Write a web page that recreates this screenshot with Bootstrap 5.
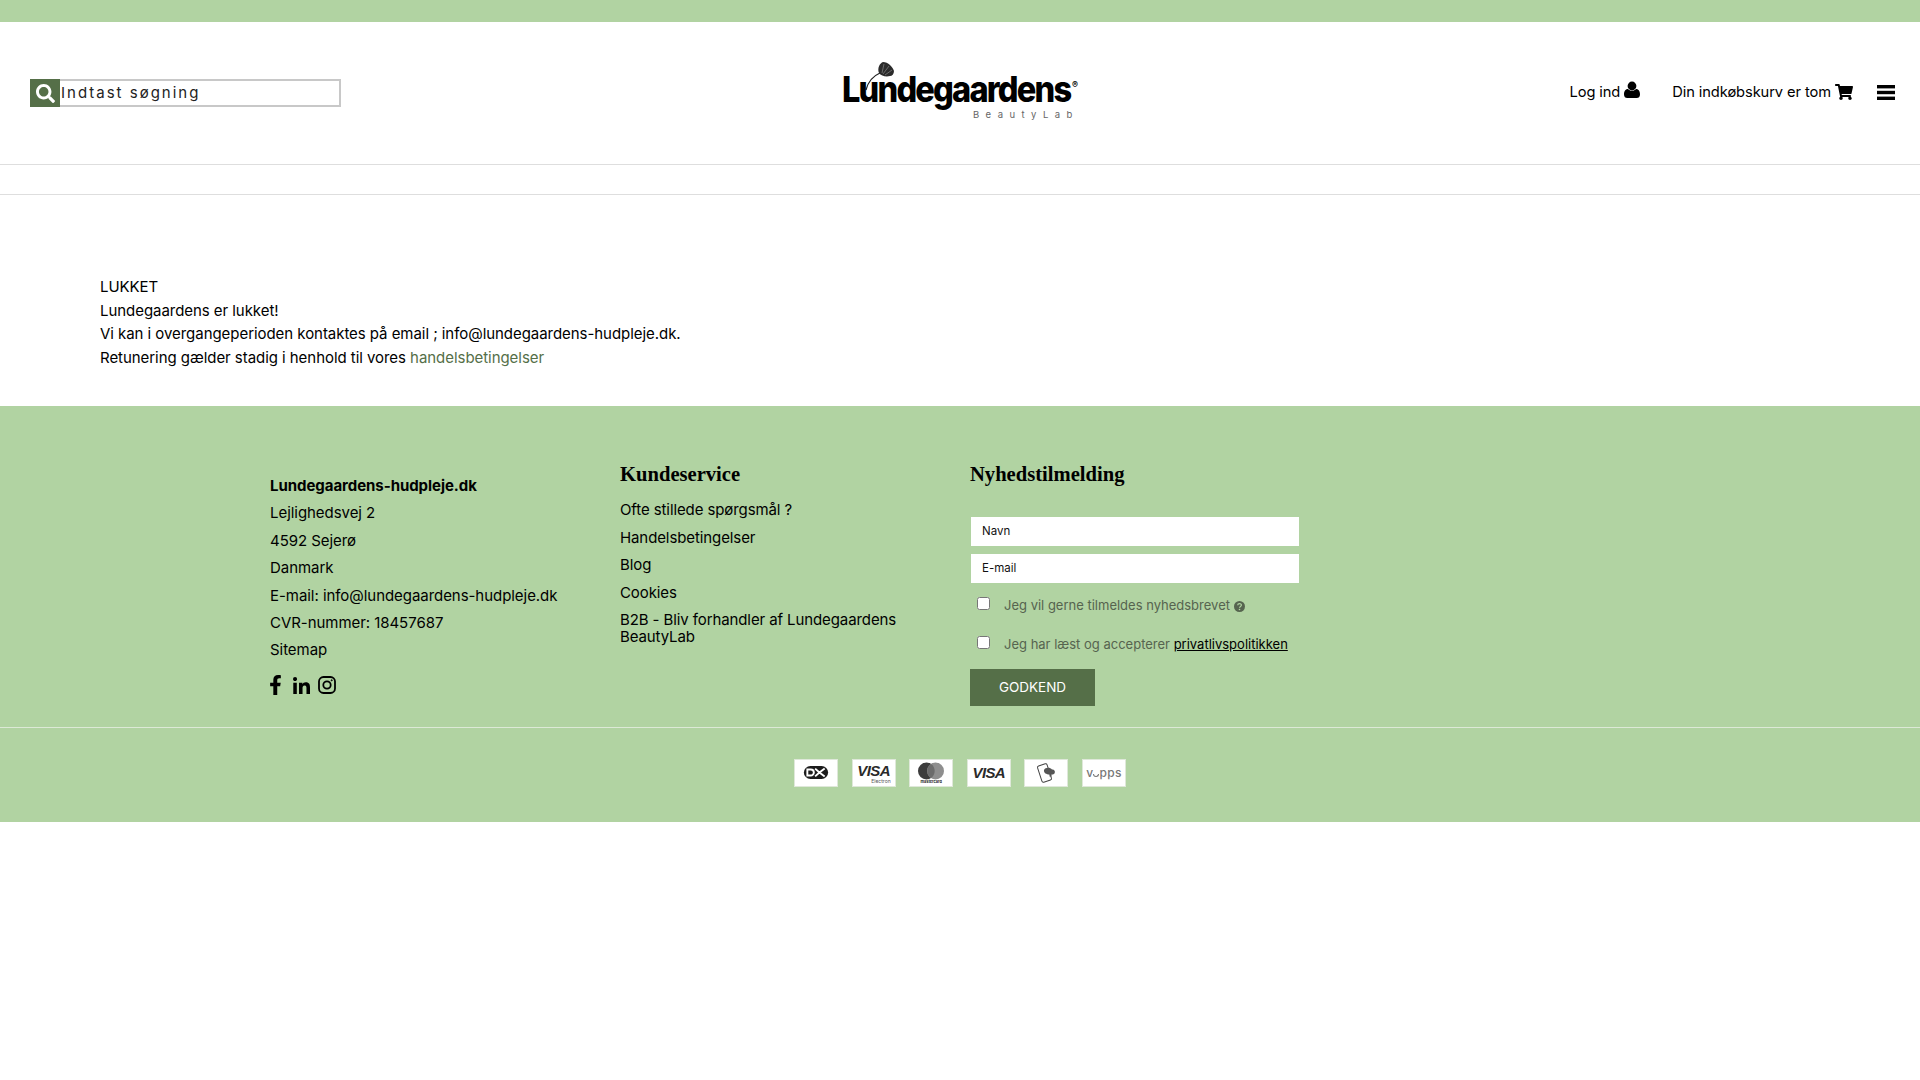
<!DOCTYPE html>
<html lang="da">
<head>
<meta charset="utf-8">
<title>Lundegaardens</title>
<link href="https://cdn.jsdelivr.net/npm/bootstrap@5.3.0/dist/css/bootstrap.min.css" rel="stylesheet">
<style>
body{font-family:Inter,"Liberation Sans",sans-serif;font-size:15px;color:#000;background:#fff}
a{color:inherit;text-decoration:none}
.topstrip{height:22px;background:#b1d3a2}
.headbar{height:143px;padding:0 25px;border-bottom:1px solid #dedede}
.navstrip{height:30px;border-bottom:1px solid #dedede}
.headside{flex:1 1 0;min-width:0}
.searchwrap{width:311px;height:28px;margin-left:5px}
.searchbtn{width:30px;height:28px;background:#556f48;border:0;padding:0}
.searchinput{flex:1;min-width:0;height:28px;border:2px solid #c8c8c8;border-left:0;padding:0 0 2px 1px;font-size:15px;letter-spacing:2px;color:#222;outline:0;font-family:inherit}
.searchinput::placeholder{color:#222;opacity:1}
.logobox{position:relative;display:block;flex:none;width:240px;height:64px;color:#000}
.logoname{position:absolute;left:2px;top:8px;font-weight:800;font-size:36px;line-height:40px;letter-spacing:-2px;white-space:nowrap;transform:scaleX(.905);transform-origin:left center}
.logosub{position:absolute;left:133px;top:48px;font-size:9.500px;line-height:12px;letter-spacing:6.400px;color:#666;white-space:nowrap}
.logoreg{position:absolute;left:232px;top:19px;font-size:9px;line-height:10px;font-weight:700}
.logoflower{position:absolute;left:25px;top:1px}
.headlinks{font-size:14.700px;letter-spacing:-.1px;padding-bottom:1px}
.content{padding:80px 100px 36.600px;line-height:23.600px;letter-spacing:-.05px}
.content a{color:#556f48}
.footmain{background:#b1d3a2;height:322px;padding:0 255px;border-bottom:1px solid #dce9d6}
.footcol{width:350px;padding:0 15px}
.footcol h5{font-family:"Liberation Serif",serif;font-weight:700;font-size:20.600px;line-height:26px;margin:0}
.addr{padding-top:66px;letter-spacing:-.05px}
.addr div{height:27.400px;line-height:27.400px}
.soc{margin-top:8px;height:24px}
.svc{padding-top:55px}
.svc ul{list-style:none;margin:14.500px 0 0;padding:0;width:290px}
.svc li{line-height:17px;margin-bottom:10.400px;letter-spacing:-.1px}
.news{padding-top:55px}
.news input.fld{display:block;width:328px;height:29px;border:0;background:#fff;margin-left:1px;margin-bottom:8px;font-size:11.500px;padding:0 11px;font-family:inherit;outline:0}
.news input.fld::placeholder{color:#111;opacity:1}
.fldfirst{margin-top:30px}
.chk{display:flex;align-items:flex-start;font-size:13px;color:#56644f;margin:0}
.chk input{width:13px;height:13px;margin:1px 14px 0 7px;flex:none}
.chk a{color:#000;text-decoration:underline}
.chk1{margin-top:13px;height:39px}
.chk2{height:34px}
.gobtn{background:#556f48;color:#fff;border:0;border-radius:0;width:125px;height:37px;font-size:13.500px;padding:0}
.footpay{background:#b1d3a2;height:94px;padding-top:31px;gap:13.600px}
.paycard{width:44px;height:28px;background:#fff;border:1px solid #dfe8da;display:flex;align-items:center;justify-content:center;overflow:hidden;position:relative}
.visa{font-family:"Liberation Sans",sans-serif;font-weight:700;font-style:italic;font-size:15px;letter-spacing:-.6px;color:#2a2a2a;line-height:1}
.visaup{margin-bottom:5px}
.visasub{position:absolute;right:4px;bottom:2px;font-size:5px;line-height:1;color:#555}
.mcsub{position:absolute;left:0;right:0;bottom:2px;text-align:center;font-size:3.800px;font-weight:700;line-height:1;color:#222}
.vipps{font-size:12px;color:#777;font-weight:500;letter-spacing:.3px}
.vippsi{color:transparent;position:relative;display:inline-block;width:6px;text-align:center}
.vippsi::after{content:"";position:absolute;left:0;right:0;bottom:5px;height:3px;border:1.500px solid #777;border-top:0;border-radius:0 0 4px 4px}
</style>
</head>
<body>
<div class="topstrip"></div>
<header class="headbar d-flex align-items-center">
  <div class="headside">
  <form class="searchwrap d-flex">
    <button class="searchbtn d-flex align-items-center justify-content-center" type="button" aria-label="Søg">
      <svg width="19" height="19" viewBox="0 0 512 512"><path fill="#fff" d="M505 442.7L405.3 343c-4.5-4.5-10.6-7-17-7H372c27.6-35.3 44-79.7 44-128C416 93.1 322.9 0 208 0S0 93.1 0 208s93.1 208 208 208c48.3 0 92.7-16.4 128-44v16.3c0 6.4 2.5 12.5 7 17l99.7 99.7c9.4 9.4 24.6 9.4 33.9 0l28.3-28.3c9.4-9.4 9.4-24.6.1-34zM208 336c-70.7 0-128-57.2-128-128 0-70.7 57.2-128 128-128 70.7 0 128 57.2 128 128 0 70.7-57.2 128-128 128z"/></svg>
    </button>
    <input class="searchinput" placeholder="Indtast søgning">
  </form>
  </div>
  <a href="#" class="logobox">
    <svg class="logoflower" width="30" height="30" viewBox="0 0 30 30"><path d="M1 28C3 20 8 14 15 11" fill="none" stroke="#222" stroke-width="1.200"/><path d="M14 11C12 6 15 1 18 0c5 0 10 5 11 9 0 3-2 5-4 5-4 1-9 0-11-3z" fill="#2b2b2b"/><path d="M17 11l2-9M18 12l6-8M20 13l7-5" stroke="#aaa" stroke-width=".5"/></svg>
    <span class="logoname">Lundegaardens</span>
    <span class="logoreg">®</span>
    <span class="logosub">BeautyLab</span>
  </a>
  <div class="headside headlinks d-flex align-items-center justify-content-end">
    <a href="#" class="d-flex align-items-center gap-1">Log ind
      <svg width="16" height="18" class="mb-1" viewBox="0 0 16 18"><circle cx="8" cy="5" r="4.400"/><path d="M0 13.500C0 9.500 2 8 4 8c1 1 2.400 1.800 4 1.800S11 9 12 8c2 0 4 1.500 4 5.500 0 2.500-1.500 3.500-3.200 3.500H3.200C1.500 17 0 16 0 13.500z"/></svg>
    </a>
    <a href="#" class="d-flex align-items-center gap-1 ms-4 ps-2">Din indkøbskurv er tom
      <svg width="18" height="16" viewBox="0 0 576 512"><path d="M528.12 301.319l47.273-208C578.806 78.301 567.391 64 551.99 64H159.208l-9.166-44.81C147.758 8.021 137.93 0 126.529 0H24C10.745 0 0 10.745 0 24v16c0 13.255 10.745 24 24 24h69.883l70.248 343.435C147.325 417.1 136 435.222 136 456c0 30.928 25.072 56 56 56s56-25.072 56-56c0-15.674-6.447-29.835-16.824-40h209.647C430.447 426.165 424 440.326 424 456c0 30.928 25.072 56 56 56s56-25.072 56-56c0-22.172-12.888-41.332-31.579-50.405l5.517-24.276c3.413-15.018-8.002-29.319-23.403-29.319H218.117l-6.545-32h293.145c11.206 0 20.92-7.754 23.403-18.681z"/></svg>
    </a>
    <a href="#" class="ms-4 d-flex" aria-label="Menu">
      <svg width="18" height="15" viewBox="0 0 18 15"><rect width="18" height="3.400"/><rect y="5.800" width="18" height="3.400"/><rect y="11.600" width="18" height="3.400"/></svg>
    </a>
  </div>
</header>
<nav class="navstrip"></nav>
<main class="content">
  <div>LUKKET</div>
  <div>Lundegaardens er lukket!</div>
  <div>Vi kan i overgangeperioden kontaktes på email ; info@lundegaardens-hudpleje.dk.</div>
  <div>Retunering gælder stadig i henhold til vores <a href="#">handelsbetingelser</a></div>
</main>
<footer>
  <div class="footmain d-flex">
    <div class="footcol addr">
      <div class="fw-bold">Lundegaardens-hudpleje.dk</div>
      <div>Lejlighedsvej 2</div>
      <div>4592 Sejerø</div>
      <div>Danmark</div>
      <div>E-mail: info@lundegaardens-hudpleje.dk</div>
      <div>CVR-nummer: 18457687</div>
      <div><a href="#">Sitemap</a></div>
      <div class="soc d-flex align-items-center gap-2">
        <svg width="11" height="20" viewBox="30 0 260 512"><path d="M279.14 288l14.22-92.66h-88.91v-60.13c0-25.35 12.42-50.06 52.24-50.06h40.42V6.26S260.43 0 225.36 0c-73.22 0-121.08 44.38-121.08 124.72v70.62H22.89V288h81.39v224h100.17V288z"/></svg>
        <svg width="17" height="17" viewBox="0 0 448 448" class="ms-1"><path d="M100.28 448H7.4V148.9h92.88zM53.79 108.1C24.09 108.1 0 83.5 0 53.8a53.79 53.79 0 0 1 107.58 0c0 29.7-24.1 54.3-53.79 54.3zM447.9 448h-92.68V302.4c0-34.7-.7-79.2-48.29-79.2-48.29 0-55.69 37.7-55.69 76.7V448h-92.78V148.9h89.08v40.8h1.3c12.4-23.5 42.69-48.3 87.88-48.3 94 0 111.28 61.9 111.28 142.3V448z"/></svg>
        <svg width="18" height="18" viewBox="0 0 18 18" fill="none" stroke="#000" stroke-width="1.800"><rect x="1" y="1" width="16" height="16" rx="4.500"/><circle cx="9" cy="9" r="3.700"/><circle cx="13.700" cy="4.300" r=".6" fill="#000" stroke-width=".8"/></svg>
      </div>
    </div>
    <div class="footcol svc">
      <h5>Kundeservice</h5>
      <ul>
        <li><a href="#">Ofte stillede spørgsmål ?</a></li>
        <li><a href="#">Handelsbetingelser</a></li>
        <li><a href="#">Blog</a></li>
        <li><a href="#">Cookies</a></li>
        <li><a href="#">B2B - Bliv forhandler af Lundegaardens BeautyLab</a></li>
      </ul>
    </div>
    <div class="footcol news">
      <h5>Nyhedstilmelding</h5>
      <form>
        <input class="fld fldfirst" placeholder="Navn">
        <input class="fld" placeholder="E-mail">
        <label class="chk chk1"><input type="checkbox"><span>Jeg vil gerne tilmeldes nyhedsbrevet
          <svg width="11" height="11" viewBox="0 0 11 11"><circle cx="5.500" cy="5.500" r="5.500" fill="#56644f"/><path d="M3.700 4.300c0-2.300 3.700-2.300 3.700-.2 0 1.400-1.900 1.300-1.900 2.700" fill="none" stroke="#b1d3a2" stroke-width="1.200"/><circle cx="5.500" cy="8.500" r=".8" fill="#b1d3a2"/></svg></span></label>
        <label class="chk chk2"><input type="checkbox"><span>Jeg har læst og accepterer <a href="#">privatlivspolitikken</a></span></label>
        <button class="btn gobtn" type="button">GODKEND</button>
      </form>
    </div>
  </div>
  <div class="footpay d-flex justify-content-center align-items-start">
    <div class="paycard"><svg width="26" height="15" viewBox="0 0 30 15"><rect x="1" y="0" width="28" height="15" rx="7.500" fill="#1c1c1c"/><path d="M5 4h4a3.500 3.500 0 0 1 0 7H5zM25 3l-6 4.500 6 4.500M14 3l5 4.500-5 4.500" fill="none" stroke="#fff" stroke-width="2.200"/></svg></div>
    <div class="paycard"><span class="visa visaup">VISA</span><span class="visasub">Electron</span></div>
    <div class="paycard"><svg width="28" height="18" viewBox="0 0 28 18" class="mb-1"><circle cx="9.500" cy="9" r="8.500" fill="#3c3c3c"/><circle cx="18.500" cy="9" r="8.500" fill="#8e8e8e"/><path d="M14 2a8.500 8.500 0 0 1 0 14 8.500 8.500 0 0 1 0-14z" fill="#6b6b6b"/></svg><span class="mcsub">mastercard</span></div>
    <div class="paycard"><span class="visa">VISA</span></div>
    <div class="paycard"><svg width="22" height="22" viewBox="0 0 22 22"><rect x="4.500" y="2.500" width="10" height="17" rx="1.500" transform="rotate(-18 9.500 11)" fill="#fff" stroke="#444" stroke-width="1"/><path d="M9 8c1-2.500 6-3 8-.5 2.500 0 3.500 2 2.500 4-1 1-2 1-3 1v2h-2v-2c-3 0-6-1.500-5.500-4.500z" fill="#555"/></svg></div>
    <div class="paycard"><span class="vipps">v<span class="vippsi">i</span>pps</span></div>
  </div>
</footer>
<script src="https://cdn.jsdelivr.net/npm/bootstrap@5.3.0/dist/js/bootstrap.bundle.min.js"></script>
</body>
</html>
